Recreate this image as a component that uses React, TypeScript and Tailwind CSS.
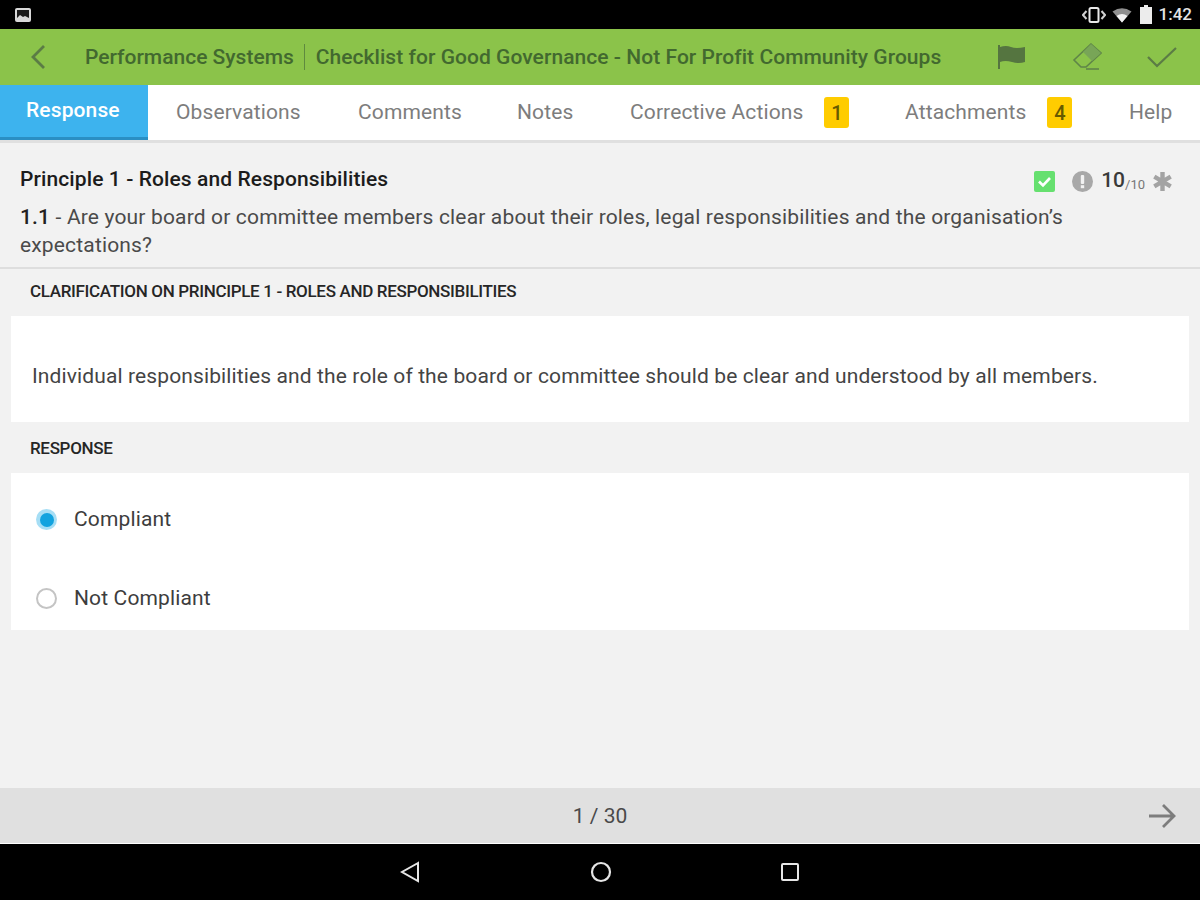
const tabs = [
  { label: 'Observations', width: 'w-[182px]' },
  { label: 'Comments', width: 'w-[159px]' },
  { label: 'Notes', width: 'w-[113px]' },
]

function Badge({ value }: { value: string }) {
  return (
    <span className="w-[25px] h-[31px] rounded-[3px] bg-[#ffcc00] flex items-center justify-center text-[20px] text-[#665a00] font-medium">
      {value}
    </span>
  )
}

function StatusBar() {
  return (
    <div className="h-[29px] bg-black flex items-center justify-between pl-[15px] pr-[8px]">
      <svg width="16" height="14" viewBox="0 0 16 14">
        <rect x="0" y="0" width="16" height="14" rx="2" fill="#d8d8d8" />
        <rect x="2" y="2" width="12" height="8" fill="#1a1a1a" />
        <path d="M2 10 L5 7 L8 9 L10 8 L14 10 Z" fill="#d8d8d8" />
      </svg>
      <div className="flex items-center">
        <svg width="24" height="18" viewBox="0 0 24 18" className="mr-[6px]">
          <rect x="7.5" y="2" width="9" height="14" rx="1.5" fill="none" stroke="#e8e8e8" strokeWidth="2" />
          <path d="M4.5 5 L1 9 L4.5 13 M19.5 5 L23 9 L19.5 13" fill="none" stroke="#d0d0d0" strokeWidth="2" />
        </svg>
        <svg width="20" height="16" viewBox="0 0 20 16" className="mr-[8px]">
          <path d="M0.5 4.5 Q10 -2 19.5 4.5 L10 15.5 Z" fill="#8f8f8f" />
          <path d="M4.5 9 Q10 5 15.5 9 L10 15.5 Z" fill="#f2f2f2" />
        </svg>
        <svg width="12" height="19" viewBox="0 0 12 19" className="mr-[7px]">
          <path d="M4 0 H8 V2 H12 V19 H0 V2 H4 Z" fill="#ececec" />
        </svg>
        <span className="text-[17px] leading-none text-[#e4e4e4] font-medium">1:42</span>
      </div>
    </div>
  )
}

function TopBar() {
  return (
    <div className="h-[56px] bg-[#8bc34a] flex items-center text-[#42692f] font-medium pt-[2px]">
      <svg width="18" height="26" viewBox="0 0 18 26" className="ml-[29px] mr-[38px] -mt-[2px]">
        <path d="M15 2 L4 13 L15 24" fill="none" stroke="#5b7c45" strokeWidth="2.8" />
      </svg>
      <span className="text-[21px] whitespace-nowrap">Performance Systems</span>
      <span className="w-px h-[26px] bg-[#5f8a3f] ml-[10px] mr-[11px] -mt-[2px]" />
      <span className="text-[21px] whitespace-nowrap tracking-[0.05px]">Checklist for Good Governance - Not For Profit Community Groups</span>
      <div className="ml-auto flex items-center -mt-[2px]">
        <svg width="30" height="26" viewBox="0 0 30 26" className="mr-[45px]">
          <path d="M2 1 V25" stroke="#557540" strokeWidth="2" />
          <path d="M3 3 Q9 1 14 3 T28 3 V18 Q22 20 15 18 T3 18 Z" fill="#557540" />
        </svg>
        <svg width="30" height="28" viewBox="0 0 30 28" className="mr-[45px]">
          <path d="M19 1 L29 10 L14 24 L9 24 L2 17 Z" fill="none" stroke="#5f8548" strokeWidth="1.6" />
          <path d="M19 1 L29 10 L20 18 L11 9 Z" fill="#78a557" />
          <path d="M14 26 H27" stroke="#5f8548" strokeWidth="1.6" />
        </svg>
        <svg width="30" height="22" viewBox="0 0 30 22" className="mr-[23px]">
          <path d="M1 11 L10 20 L29 2" fill="none" stroke="#5b7c45" strokeWidth="2.2" />
        </svg>
      </div>
    </div>
  )
}

function TabBar() {
  return (
    <div className="h-[58px] bg-white border-b-[3px] border-[#e0e0e0] flex text-[21px] tracking-[0.12px] text-[#7d7d7d] shrink-0">
      <div className="w-[148px] bg-[#3db3ee] border-b-[3px] border-[#2a8fc4] text-white font-medium pl-[26px] pt-[11px] leading-[28px]">
        Response
      </div>
      {tabs.map((t) => (
        <div key={t.label} className={`${t.width} pl-[28px] flex items-center`}>{t.label}</div>
      ))}
      <div className="w-[275px] pl-[28px] flex items-center">
        <span>Corrective Actions</span>
        <span className="ml-[21px]"><Badge value="1" /></span>
      </div>
      <div className="w-[252px] pl-[28px] flex items-center">
        <span>Attachments</span>
        <span className="ml-[21px]"><Badge value="4" /></span>
      </div>
      <div className="flex items-center">Help</div>
    </div>
  )
}

function QuestionHeader() {
  return (
    <div className="h-[126px] border-b-2 border-[#dedede] pl-[20px] pr-[60px] pt-[22px] relative">
      <div className="text-[21px] leading-[28px] font-medium text-[#1c1c1c] tracking-[0.1px]">Principle 1 - Roles and Responsibilities</div>
      <div className="text-[21px] leading-[28px] tracking-[0.16px] text-[#4a4a4a] mt-[10px]">
        <span className="text-[#222] font-medium">1.1</span> - Are your board or committee members clear about their roles, legal responsibilities and the organisation’s
        <br />
        expectations?
      </div>
      <div className="absolute right-[27px] top-[26px] flex items-center">
        <svg width="21" height="21" viewBox="0 0 21 21" className="mr-[17px]">
          <rect width="21" height="21" rx="2" fill="#66e06f" />
          <path d="M5 10.5 L9 14.5 L16 7" fill="none" stroke="#fff" strokeWidth="2.6" />
        </svg>
        <svg width="21" height="21" viewBox="0 0 21 21" className="mr-[8px]">
          <circle cx="10.5" cy="10.5" r="10.5" fill="#a8a8a8" />
          <rect x="8.8" y="4" width="3.4" height="9" rx="1" fill="#f2f2f2" />
          <rect x="8.8" y="14.2" width="3.4" height="3" fill="#f2f2f2" />
        </svg>
        <span className="text-[21px] text-[#3a3a3a] leading-none font-medium mb-[2px]">10</span>
        <span className="text-[13px] text-[#777] mt-[6px] mr-[7px]">/10</span>
        <svg width="21" height="21" viewBox="0 0 21 21">
          <path d="M10.5 1 V20 M2.3 5.7 L18.7 15.3 M18.7 5.7 L2.3 15.3" stroke="#a3a3a3" strokeWidth="4.4" />
        </svg>
      </div>
    </div>
  )
}

function SectionLabel({ children, height, offset }: { children: string; height: string; offset: string }) {
  return (
    <div className={`${height} ${offset} pl-[30px] flex items-center text-[17px] font-medium text-[#262626] tracking-[-0.33px]`}>
      {children}
    </div>
  )
}

function Radio({ checked, label }: { checked: boolean; label: string }) {
  return (
    <div className="h-[79px] pl-[25px] flex items-center">
      {checked ? (
        <span className="w-[21px] h-[21px] rounded-full bg-[#a6def5] flex items-center justify-center">
          <span className="w-[14px] h-[14px] rounded-full bg-[#12a3df]" />
        </span>
      ) : (
        <span className="w-[21px] h-[21px] rounded-full border-2 border-[#c4c4c4] bg-white" />
      )}
      <span className="ml-[17px] text-[21px] tracking-[0.14px] text-[#3d3d3d]">{label}</span>
    </div>
  )
}

export default function App() {
  return (
    <div className="w-[1200px] h-[900px] flex flex-col bg-[#f2f2f2] overflow-hidden font-['Roboto',sans-serif]">
      <StatusBar />
      <TopBar />
      <TabBar />
      <div className="flex-1 flex flex-col">
        <QuestionHeader />
        <SectionLabel height="h-[47px]" offset="pb-[2px]">CLARIFICATION ON PRINCIPLE 1 - ROLES AND RESPONSIBILITIES</SectionLabel>
        <div className="mx-[11px] h-[106px] bg-white pl-[21px] pt-[16px] flex items-center text-[21px] tracking-[0.12px] text-[#444]">
          Individual responsibilities and the role of the board or committee should be clear and understood by all members.
        </div>
        <SectionLabel height="h-[51px]" offset="pt-[2px]">RESPONSE</SectionLabel>
        <div className="mx-[11px] h-[157px] bg-white pt-[7px]">
          <Radio checked label="Compliant" />
          <Radio checked={false} label="Not Compliant" />
        </div>
      </div>
      <div className="h-[56px] bg-[#e0e0e0] border-b border-white pt-[2px] relative flex items-center justify-center text-[21px] text-[#4a4a4a]">
        1 / 30
        <svg width="28" height="26" viewBox="0 0 28 26" className="absolute right-[24px] top-[15px]">
          <path d="M1 13 H26 M15 2 L26 13 L15 24" fill="none" stroke="#7d7d7d" strokeWidth="2.8" />
        </svg>
      </div>
      <div className="h-[56px] bg-black flex items-center justify-center shrink-0">
        <svg width="20" height="22" viewBox="0 0 20 22" className="mr-[170px]">
          <path d="M18 2 L2 11 L18 20 Z" fill="none" stroke="#e6e6e6" strokeWidth="2" />
        </svg>
        <svg width="22" height="22" viewBox="0 0 22 22" className="mr-[168px]">
          <circle cx="11" cy="11" r="9" fill="none" stroke="#e6e6e6" strokeWidth="2.2" />
        </svg>
        <svg width="20" height="20" viewBox="0 0 20 20">
          <rect x="2" y="2" width="16" height="16" rx="1" fill="none" stroke="#e6e6e6" strokeWidth="2" />
        </svg>
      </div>
    </div>
  )
}
